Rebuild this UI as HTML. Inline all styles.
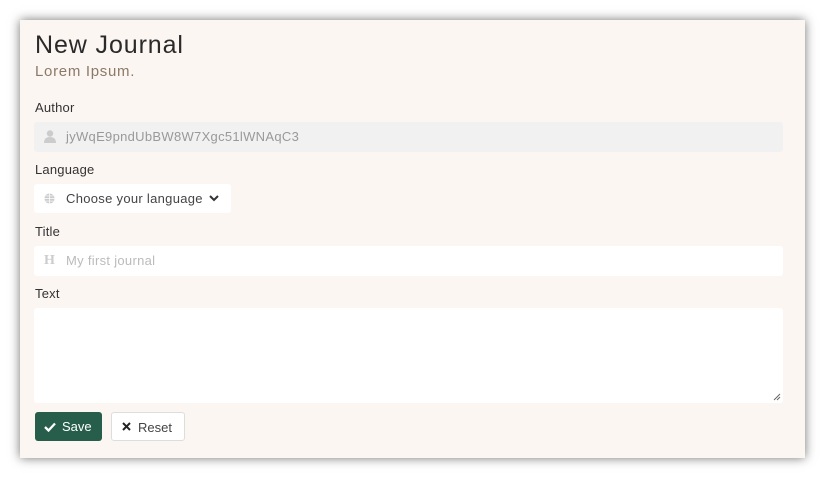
<!DOCTYPE html>
<html><head><style>
body{margin:0;width:825px;height:479px;background:#fff;font-family:"Liberation Sans",sans-serif;position:relative;overflow:hidden}
.card{position:absolute;left:20px;top:20px;width:785px;height:438px;background:#fcf6f3;box-shadow:0 0 10px rgba(0,0,0,.55)}
.a{position:absolute}
h1{position:absolute;left:15px;top:11px;margin:0;font-size:25px;letter-spacing:0.9px;font-weight:normal;color:#2a2a2a}
.sub{left:15px;top:43px;font-size:15px;letter-spacing:0.7px;color:#8b7a68}
.lbl{font-size:13px;color:#333;left:15px;letter-spacing:0.2px}
.in{left:14px;width:749px;height:30px;border-radius:3px;background:#fff;font-size:13px;line-height:30px;letter-spacing:0.3px}
.ph{color:#bbb;position:absolute;left:32px}
.btn{top:392px;height:29px;border-radius:3px;font-size:13px;line-height:29px;box-sizing:border-box}
</style></head><body>
<div class="card">
<h1>New Journal</h1>
<div class="a sub">Lorem Ipsum.</div>
<div class="a lbl" style="top:80px">Author</div>
<div class="a in" style="top:102px;background:#f1f1f1">
 <svg class="a" style="left:10px;top:8px" width="12" height="13" viewBox="0 0 12 13"><circle cx="6" cy="3.5" r="3.2" fill="#ccc"/><path d="M0 13 Q0 7 6 7 Q12 7 12 13Z" fill="#ccc"/></svg>
 <span class="ph" style="color:#999">jyWqE9pndUbBW8W7Xgc51lWNAqC3</span></div>
<div class="a lbl" style="top:142px">Language</div>
<div class="a in" style="top:164px;width:197px;height:29px;line-height:29px">
 <svg class="a" style="left:10px;top:9px" width="11" height="11" viewBox="0 0 12 12"><circle cx="6" cy="6" r="5.5" fill="#ccc"/><path d="M0.5 6H11.5M6 .5V11.5M1.5 3.2H10.5M1.5 8.8H10.5" stroke="#fff" stroke-width=".8"/></svg>
 <span class="ph" style="color:#444">Choose your language</span>
 <svg class="a" style="left:175px;top:11px" width="10" height="7" viewBox="0 0 10 7"><path d="M1 1L5 5L9 1" stroke="#333" stroke-width="2" fill="none"/></svg></div>
<div class="a lbl" style="top:204px">Title</div>
<div class="a in" style="top:226px"><span class="a" style="left:10px;color:#ccc;font-weight:bold;font-family:'Liberation Serif',serif;font-size:14px">H</span><span class="ph">My first journal</span></div>
<div class="a lbl" style="top:266px">Text</div>
<div class="a in" style="top:288px;height:95px">
 <svg class="a" style="right:2px;bottom:2px" width="8" height="8"><path d="M7 1L1 7M7 4L4 7" stroke="#666"/></svg></div>
<div class="a btn" style="left:15px;width:67px;background:#265e4b;color:#fff;padding-left:27px">Save
 <svg class="a" style="left:9px;top:10px" width="12" height="10" viewBox="0 0 12 10"><path d="M1 5L4.5 8.5L11 1.5" stroke="#fff" stroke-width="2.3" fill="none"/></svg></div>
<div class="a btn" style="left:91px;width:74px;background:#fff;border:1px solid #ddd;color:#444;padding-left:26px">Reset
 <svg class="a" style="left:10px;top:9px" width="9" height="9"><path d="M1 1L8 8M8 1L1 8" stroke="#222" stroke-width="2"/></svg></div>
</div>
</body></html>
